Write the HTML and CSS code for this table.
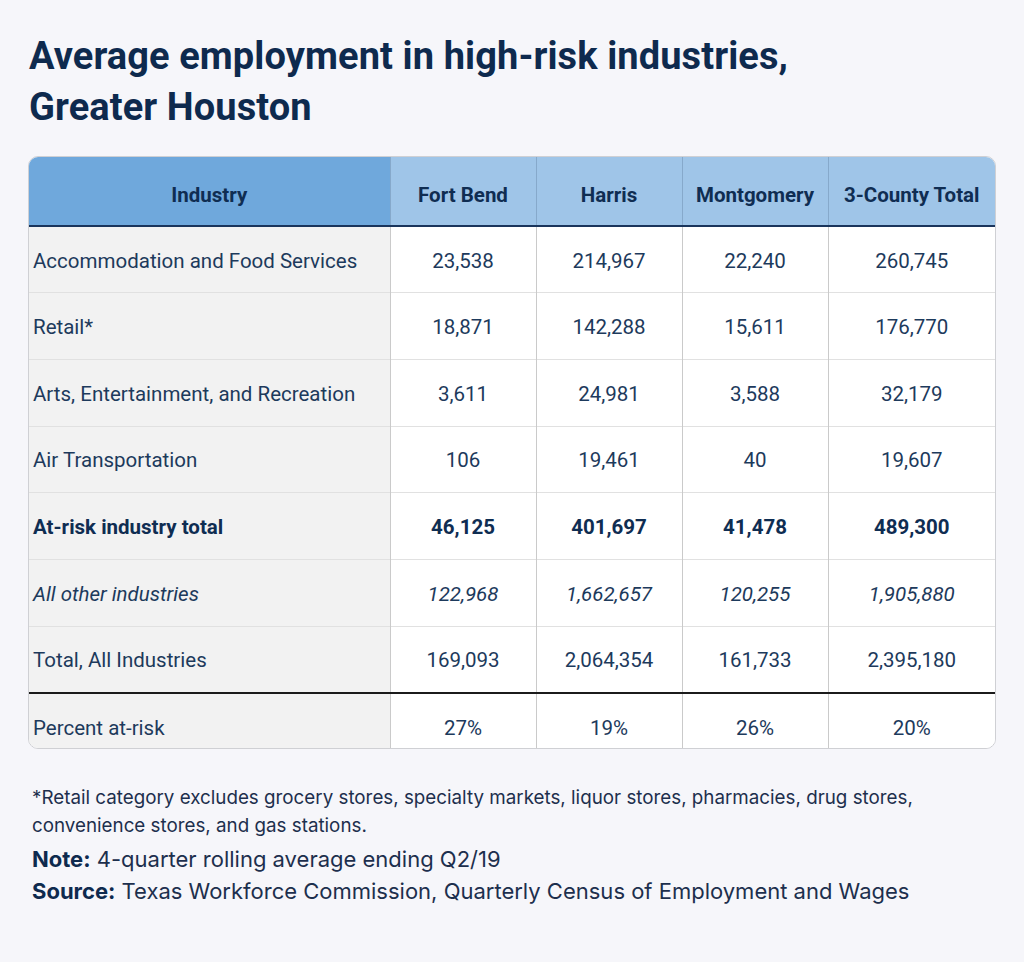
FILE: index.html
```html
<!DOCTYPE html>
<html lang="en">
<head>
<meta charset="utf-8">
<title>Average employment in high-risk industries, Greater Houston</title>
<link rel="stylesheet" href="styles.css">
</head>
<body>
<main class="page">
  <h1 class="title">Average employment in high-risk industries,<br>Greater Houston</h1>
  <div class="table-wrap">
    <table class="data">
      <thead>
        <tr>
          <th class="col-ind">Industry</th>
          <th class="col-num">Fort Bend</th>
          <th class="col-num">Harris</th>
          <th class="col-num">Montgomery</th>
          <th class="col-tot">3-County Total</th>
        </tr>
      </thead>
      <tbody>
        <tr><td class="ind">Accommodation and Food Services</td><td>23,538</td><td>214,967</td><td>22,240</td><td>260,745</td></tr>
        <tr><td class="ind">Retail*</td><td>18,871</td><td>142,288</td><td>15,611</td><td>176,770</td></tr>
        <tr><td class="ind">Arts, Entertainment, and Recreation</td><td>3,611</td><td>24,981</td><td>3,588</td><td>32,179</td></tr>
        <tr><td class="ind">Air Transportation</td><td>106</td><td>19,461</td><td>40</td><td>19,607</td></tr>
        <tr class="bold"><td class="ind">At-risk industry total</td><td>46,125</td><td>401,697</td><td>41,478</td><td>489,300</td></tr>
        <tr class="ital"><td class="ind">All other industries</td><td>122,968</td><td>1,662,657</td><td>120,255</td><td>1,905,880</td></tr>
        <tr class="total"><td class="ind">Total, All Industries</td><td>169,093</td><td>2,064,354</td><td>161,733</td><td>2,395,180</td></tr>
        <tr><td class="ind">Percent at-risk</td><td>27%</td><td>19%</td><td>26%</td><td>20%</td></tr>
      </tbody>
    </table>
  </div>
  <p class="footnote">*Retail category excludes grocery stores, specialty markets, liquor stores, pharmacies, drug stores,<br>convenience stores, and gas stations.</p>
  <div class="meta">
    <p class="meta-line"><strong>Note:</strong> 4-quarter rolling average ending Q2/19</p>
    <p class="meta-line"><strong>Source:</strong> Texas Workforce Commission, Quarterly Census of Employment and Wages</p>
  </div>
</main>
</body>
</html>
```

FILE: styles.css
```css
html, body {
  margin: 0;
  padding: 0;
  background: #f6f6fa;
}
body {
  font-family: Roboto, "Liberation Sans", sans-serif;
  color: #0f2a4d;
}
.page {
  width: 1024px;
  height: 962px;
  padding: 31px 28px 0 28px;
  box-sizing: border-box;
}
.title {
  margin: 0 0 0 1px;
  font-family: Roboto, sans-serif;
  font-weight: 700;
  font-size: 38px;
  line-height: 51px;
  letter-spacing: 0.1px;
  color: #0e2a4e;
}
.table-wrap {
  margin-top: 23px;
  width: 968px;
  height: 593px;
  box-sizing: border-box;
  border: 1px solid #cfd0d4;
  border-radius: 10px;
  overflow: hidden;
  background: #fff;
}
.data {
  width: 100%;
  border-collapse: collapse;
  table-layout: fixed;
  font-size: 20.5px;
  color: #1d3a5c;
}
.data th {
  height: 69px;
  padding: 7px 0 0 0;
  box-sizing: border-box;
  font-weight: 700;
  font-size: 20.5px;
  color: #0f2d52;
  background: #9fc5e8;
  border-bottom: 2px solid #1a355c;
  border-left: 1px solid #86a9cb;
  text-align: center;
}
.data th:first-child { border-left: none; }
.data th.col-ind { width: 361px; background: #6fa8dc; }
.data th.col-num { width: 146px; }
.data td {
  height: 66.7px;
  padding: 2px 0 0 0;
  box-sizing: border-box;
  text-align: center;
  border-top: 1px solid #e1e1e1;
  border-left: 1px solid #cacaca;
  background: #fff;
}
.data tbody tr:first-child td { border-top: none; }
.data td.ind {
  text-align: left;
  padding-left: 4px;
  background: #f2f2f2;
  border-left: none;
}
.data tr.bold td { font-weight: 700; color: #0f2d52; }
.data tr.ital td { font-style: italic; }
.data tr.total td { border-bottom: 2px solid #1b1b1b; }
.footnote {
  margin: 35px 0 0 4px;
  font-family: Inter, sans-serif;
  font-size: 18.8px;
  line-height: 28px;
  color: #1d2f4d;
}
.meta {
  margin: 3px 0 0 4px;
}
.meta-line {
  margin: 0;
  font-family: Inter, sans-serif;
  font-size: 22px;
  line-height: 32px;
  color: #1d2f4d;
}
.meta-line strong { color: #0e2a4e; font-weight: 700; }
```
